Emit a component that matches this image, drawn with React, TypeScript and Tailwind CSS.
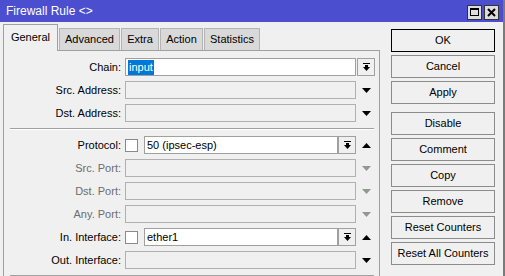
import type { ReactNode } from "react";

const font = { fontFamily: '"Liberation Sans", Arial, sans-serif' };

const DropIcon = () => (
  <svg width="7" height="8" viewBox="0 0 7 8">
    <rect x="0" y="0" width="7" height="1" fill="#000" />
    <rect x="2" y="2" width="3" height="2" fill="#000" />
    <polygon points="0,4 7,4 3.5,8" fill="#000" />
  </svg>
);

const Arrow = ({ up, dim }: { up?: boolean; dim?: boolean }) => (
  <svg width="9" height="5" viewBox="0 0 9 5">
    <polygon points={up ? "0,5 9,5 4.5,0" : "0,0 9,0 4.5,5"} fill={dim ? "#8f9a8f" : "#000"} />
  </svg>
);

const DropBtn = () => (
  <div className="w-[18px] h-[18px] border border-[#a0a0a0] bg-[#f0f0f0] flex items-center justify-center shrink-0">
    <DropIcon />
  </div>
);

const Input = ({ children, disabled, w }: { children?: ReactNode; disabled?: boolean; w: string }) => (
  <div
    className={`${w} h-[18px] border flex items-center pl-[2px] text-[11px] text-black shrink-0 ${
      disabled ? "border-[#b0b0b0] bg-[#f0f0f0]" : "border-[#a0a0a0] bg-white"
    }`}
  >
    {children}
  </div>
);

const Row = ({
  label,
  dim,
  children,
  extra,
}: {
  label: string;
  dim?: boolean;
  children: ReactNode;
  extra?: ReactNode;
}) => (
  <div className="flex items-center h-[18px]">
    <div className={`w-[117px] text-right text-[11px] ${dim ? "text-[#6d6d6d]" : "text-black"}`}>{label}</div>
    <div className="ml-[4px] w-[231px] flex items-center">{children}</div>
    <div className="w-[18px] flex items-center justify-center ml-[1px]">{extra}</div>
  </div>
);

const Sep = () => <div className="ml-[6px] w-[364px] h-[2px] border-t border-[#a0a0a0] border-b-white border-b" />;

const Btn = ({ children, def }: { children: ReactNode; def?: boolean }) => (
  <div
    className={`h-[23px] w-[104px] flex items-center justify-center text-[11px] text-black bg-[#f0f0f0] border ${
      def ? "border-black" : "border-[#8c8c8c]"
    }`}
  >
    {children}
  </div>
);

const Check = () => <div className="w-[13px] h-[13px] border border-[#8a8a8a] bg-white shrink-0" />;

export default function App() {
  const tabs = [
    { name: "Advanced", w: "w-[61px]" },
    { name: "Extra", w: "w-[38px]" },
    { name: "Action", w: "w-[43px]" },
    { name: "Statistics", w: "w-[56px]" },
  ];

  return (
    <div className="w-[505px] h-[276px] overflow-hidden bg-[#f0f0f0] border-r-2 border-[#7a7a7a]" style={font}>
      <div className="h-[22px] bg-[#4a4ecf] flex items-center pl-[6px] pr-[4px] text-white text-[12px]">
        <span className="flex-1">Firewall Rule &lt;&gt;</span>
        <div className="flex gap-[2px] mt-[2px]">
          <div className="w-[15px] h-[15px] bg-[#dcdcdc] border border-[#333] flex items-center justify-center">
            <div className="w-[9px] h-[8px] border border-black border-t-2" />
          </div>
          <div className="w-[15px] h-[15px] bg-[#dcdcdc] border border-[#333] flex items-center justify-center">
            <svg width="9" height="9" viewBox="0 0 9 9">
              <path d="M1 1 L8 8 M8 1 L1 8" stroke="#000" strokeWidth="2" />
            </svg>
          </div>
        </div>
      </div>

      <div className="flex pl-[3px] pt-[2px]">
        <div className="w-[377px] flex flex-col">
          <div className="flex items-start h-[26px] gap-[1px] text-[11px] text-black">
            <div className="relative z-10 w-[55px] h-[27px] bg-[#f0f0f0] border border-b-0 border-[#a0a0a0] flex items-center justify-center pb-[2px]">
              General
            </div>
            {tabs.map((t) => (
              <div
                key={t.name}
                className={`${t.w} h-[22px] mt-[4px] bg-[#d9d9d9] border border-b-0 border-[#b4b4b4] flex items-center justify-center`}
              >
                {t.name}
              </div>
            ))}
          </div>
          <div className="border-t border-l border-r border-[#a0a0a0] pt-[7px] h-[228px] flex flex-col gap-[5px]">
            <Row label="Chain:" extra={<DropBtn />}>
              <Input w="w-[231px]">
                <span className="bg-[#0078d7] text-white leading-[15px] px-px">input</span>
              </Input>
            </Row>
            <Row label="Src. Address:" extra={<Arrow />}>
              <Input w="w-[231px]" disabled />
            </Row>
            <Row label="Dst. Address:" extra={<Arrow />}>
              <Input w="w-[231px]" disabled />
            </Row>
            <div className="py-[1px]">
              <Sep />
            </div>
            <Row label="Protocol:" extra={<Arrow up />}>
              <Check />
              <div className="ml-[6px]">
                <Input w="w-[194px]">50 (ipsec-esp)</Input>
              </div>
              <DropBtn />
            </Row>
            <Row label="Src. Port:" dim extra={<Arrow dim />}>
              <Input w="w-[231px]" disabled />
            </Row>
            <Row label="Dst. Port:" dim extra={<Arrow dim />}>
              <Input w="w-[231px]" disabled />
            </Row>
            <Row label="Any. Port:" dim extra={<Arrow dim />}>
              <Input w="w-[231px]" disabled />
            </Row>
            <Row label="In. Interface:" extra={<Arrow up />}>
              <Check />
              <div className="ml-[6px]">
                <Input w="w-[194px]">ether1</Input>
              </div>
              <DropBtn />
            </Row>
            <Row label="Out. Interface:" extra={<Arrow />}>
              <Input w="w-[231px]" disabled />
            </Row>
            <div className="pt-[1px]">
              <Sep />
            </div>
          </div>
        </div>

        <div className="ml-[11px] pt-[5px] flex flex-col gap-[3px]">
          <Btn def>OK</Btn>
          <Btn>Cancel</Btn>
          <Btn>Apply</Btn>
          <div className="h-[2px]" />
          <Btn>Disable</Btn>
          <Btn>Comment</Btn>
          <Btn>Copy</Btn>
          <Btn>Remove</Btn>
          <Btn>Reset Counters</Btn>
          <Btn>Reset All Counters</Btn>
        </div>
      </div>
    </div>
  );
}
